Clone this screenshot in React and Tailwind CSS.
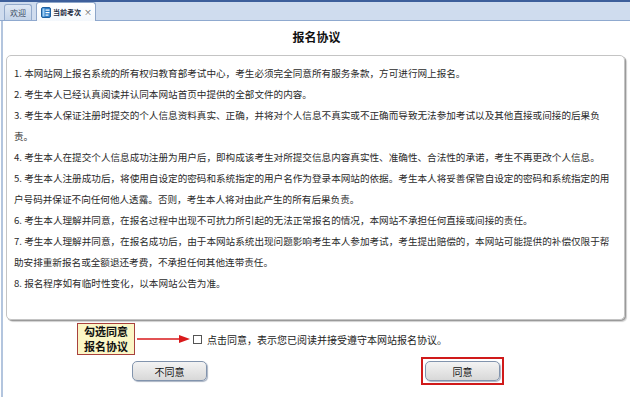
import React from "react";

const lines = [
  "1. 本网站网上报名系统的所有权归教育部考试中心，考生必须完全同意所有服务条款，方可进行网上报名。",
  "2. 考生本人已经认真阅读并认同本网站首页中提供的全部文件的内容。",
  "3. 考生本人保证注册时提交的个人信息资料真实、正确，并将对个人信息不真实或不正确而导致无法参加考试以及其他直接或间接的后果负",
  "责。",
  "4. 考生本人在提交个人信息成功注册为用户后，即构成该考生对所提交信息内容真实性、准确性、合法性的承诺，考生不再更改个人信息。",
  "5. 考生本人注册成功后，将使用自设定的密码和系统指定的用户名作为登录本网站的依据。考生本人将妥善保管自设定的密码和系统指定的用",
  "户号码并保证不向任何他人透露。否则，考生本人将对由此产生的所有后果负责。",
  "6. 考生本人理解并同意，在报名过程中出现不可抗力所引起的无法正常报名的情况，本网站不承担任何直接或间接的责任。",
  "7. 考生本人理解并同意，在报名成功后，由于本网站系统出现问题影响考生本人参加考试，考生提出赔偿的，本网站可能提供的补偿仅限于帮",
  "助安排重新报名或全额退还考费，不承担任何其他连带责任。",
  "8. 报名程序如有临时性变化，以本网站公告为准。",
];

function BookIcon() {
  return (
    <svg width="10" height="11" viewBox="0 0 10 11" className="shrink-0">
      <rect x="0.5" y="0.5" width="9" height="10" rx="1.5" fill="#2f7fc8" stroke="#1d5e9e" />
      <rect x="1.5" y="1.5" width="2" height="8" fill="#9fd0f5" />
      <rect x="4.5" y="2.5" width="4" height="1.2" fill="#fff" />
      <rect x="4.5" y="5" width="4" height="1.2" fill="#fff" />
      <rect x="4.5" y="7.5" width="3" height="1.2" fill="#fff" />
    </svg>
  );
}

const btn =
  "w-[75px] h-[20px] rounded-[5px] border border-[#8294ad] bg-gradient-to-b from-[#f3f3f3] to-[#d8d8d8] shadow-[1px_1px_1px_#aab4c4] text-[10px] text-[#111] flex items-center justify-center";

export default function App() {
  return (
    <div
      className="w-[630px] h-[397px] bg-white overflow-hidden flex flex-col"
      style={{ fontFamily: '"Noto Sans CJK SC", "Liberation Sans", sans-serif' }}
    >
      <div className="h-[2px] bg-[#3d5f9b]" />
      <div className="h-[19px] bg-[#cfdcee] border-b border-[#8fa9cf] flex items-end pl-[4px] gap-[4px]">
        <div className="h-[16px] w-[28px] flex items-center justify-center border border-b-0 border-[#93aacb] rounded-t-[3px] bg-gradient-to-b from-[#dfe8f4] to-[#c3d3e8] text-[8px] leading-none text-[#3a4a60] whitespace-nowrap">
          欢迎
        </div>
        <div className="h-[19px] -mb-px flex items-center pl-[4px] pr-[3px] border border-b-0 border-[#8ea6c9] rounded-t-[3px] bg-gradient-to-b from-[#ffffff] to-[#f4f8fc] text-[7px] leading-none font-bold text-[#1b2a40] whitespace-nowrap">
          <BookIcon />
          <span className="ml-[2px]">当前考次</span>
          <span className="ml-[3px] font-normal text-[8px] text-[#555]">×</span>
        </div>
      </div>

      <div className="flex-1 ml-[1px] border-l-2 border-[#b3c5de] flex flex-col">
        <div className="h-[34px] flex items-center justify-center text-[12px] font-bold text-[#111] pb-[3px]">
          报名协议
        </div>
        <div className="ml-[3px] w-[619px] h-[265px] border border-[#c4c4c4] rounded-[5px] shadow-[1px_1px_0_#9a9a9a,2px_2px_1px_#d0d0d0] pt-[7px] pl-[7px]">
          {lines.map((t, i) => (
            <div key={i} className="whitespace-nowrap text-[9.6px] leading-[21px] text-[#2a2a2a]">
              {t}
            </div>
          ))}
        </div>

        <div className="flex items-center mt-[3px] pl-[74px]">
          <div className="w-[58px] h-[32px] border border-[#a8413d] bg-[#fbf6c6] flex items-center justify-center">
            <p className="text-center text-[11px] leading-[15px] font-bold text-[#111]">
              勾选同意
              <br />
              报名协议
            </p>
          </div>
          <svg width="54" height="10" viewBox="0 0 54 10" className="ml-[2px]">
            <line x1="0" y1="5" x2="44" y2="5" stroke="#d9191b" strokeWidth="1.5" />
            <polygon points="42,1 53,5 42,9" fill="#d9191b" />
          </svg>
          <div className="ml-[2px] w-[9px] h-[9px] border border-[#555] bg-white" />
          <span className="ml-[5px] text-[10px] text-[#222] whitespace-nowrap">
            点击同意，表示您已阅读并接受遵守本网站报名协议。
          </span>
        </div>

        <div className="flex items-center mt-[2px] pl-[129px]">
          <button className={btn}>不同意</button>
          <div className="ml-[214px] border-2 border-[#d01a1a] p-[2px]">
            <button className={btn}>同意</button>
          </div>
        </div>
      </div>
    </div>
  );
}
